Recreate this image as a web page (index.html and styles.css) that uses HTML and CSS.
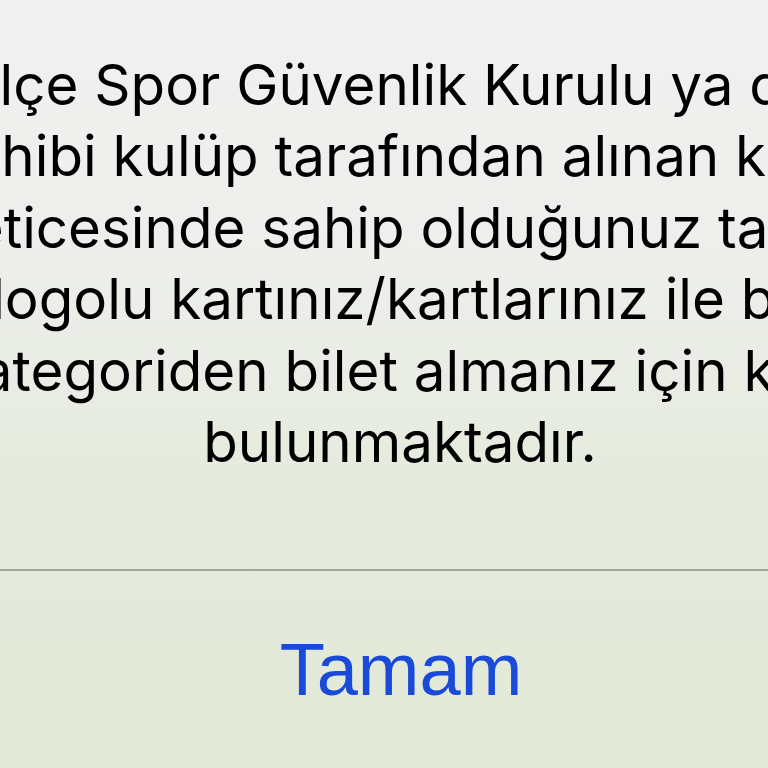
FILE: index.html
```html
<!DOCTYPE html>
<html lang="tr">
<head>
<meta charset="utf-8">
<link rel="stylesheet" href="styles.css">
</head>
<body>
<div class="alert">
  <div class="message">
    <div class="line">İlçe Spor Güvenlik Kurulu ya da</div>
    <div class="line">ev sahibi kulüp tarafından alınan kararlar</div>
    <div class="line">neticesinde sahip olduğunuz takım</div>
    <div class="line">logolu kartınız/kartlarınız ile bu</div>
    <div class="line">kategoriden bilet almanız için kısıt</div>
    <div class="line">bulunmaktadır.</div>
  </div>
  <div class="separator"></div>
  <div class="action"><span class="btn">Tamam</span></div>
</div>
</body>
</html>
```
FILE: styles.css
```css
html, body {
  margin: 0;
  padding: 0;
  width: 768px;
  height: 768px;
  overflow: hidden;
}
body {
  background: linear-gradient(to bottom, #f0f0f0 0%, #eeefec 30%, #e6ebdf 60%, #e2e9d6 100%);
}
.alert {
  width: 768px;
  display: flex;
  flex-direction: column;
}
.message {
  width: 800px;
  display: flex;
  flex-direction: column;
  align-items: center;
  padding-top: 49px;
  height: 520px;
  box-sizing: border-box;
  font-family: Inter, "Noto Sans", sans-serif;
  font-size: 56.5px;
  line-height: 71.4px;
  color: #000;
}
.line {
  white-space: nowrap;
  flex: none;
}
.separator {
  height: 2px;
  margin-top: 49px;
  background: #a2a897;
}
.action {
  display: flex;
  justify-content: center;
  width: 802px;
  padding-top: 59px;
}
.btn {
  font-family: "Liberation Sans", Arial, sans-serif;
  font-size: 74px;
  line-height: 80px;
  color: #1a4ad8;
}
```
